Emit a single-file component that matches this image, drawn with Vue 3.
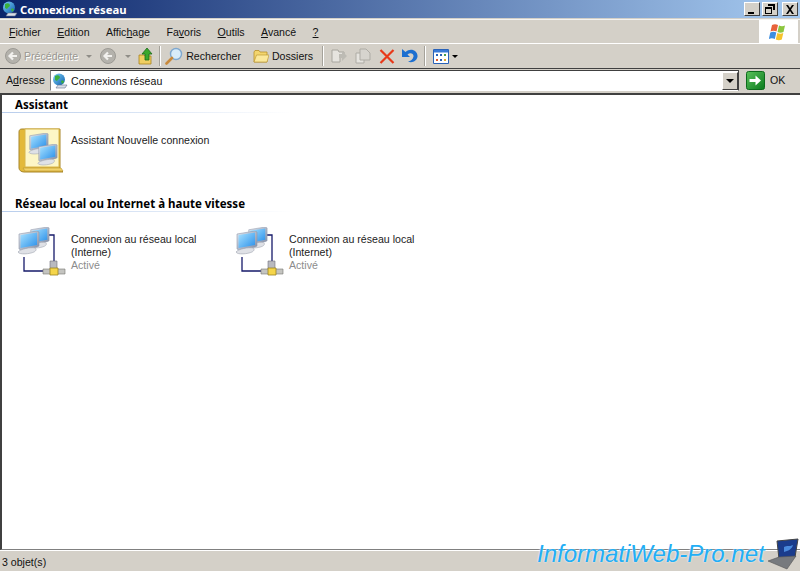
<script setup>
const menus = [
  { pre: '', key: 'F', post: 'ichier' },
  { pre: '', key: 'E', post: 'dition' },
  { pre: 'Affic', key: 'h', post: 'age' },
  { pre: 'Fa', key: 'v', post: 'oris' },
  { pre: '', key: 'O', post: 'utils' },
  { pre: '', key: 'A', post: 'vancé' },
  { pre: '', key: '?', post: '' }
]
const connections = [
  { name: 'Connexion au réseau local', sub: '(Interne)' },
  { name: 'Connexion au réseau local', sub: '(Internet)' }
]
</script>

<template>
  <div class="window">
    <svg width="0" height="0" class="defs">
      <defs>
        <linearGradient id="screen" x1="0" y1="0" x2="1" y2="1">
          <stop offset="0" stop-color="#a8e2ff" />
          <stop offset="1" stop-color="#2a90ea" />
        </linearGradient>
        <linearGradient id="case" x1="0" y1="0" x2="1" y2="1">
          <stop offset="0" stop-color="#e8eaf0" />
          <stop offset="1" stop-color="#7f8ba4" />
        </linearGradient>
        <linearGradient id="globe" x1="0" y1="0" x2="1" y2="1">
          <stop offset="0" stop-color="#7fd0f5" />
          <stop offset="1" stop-color="#0d5fb0" />
        </linearGradient>
        <linearGradient id="goBtn" x1="0" y1="0" x2="1" y2="1">
          <stop offset="0" stop-color="#5bc25b" />
          <stop offset="1" stop-color="#0a7a1e" />
        </linearGradient>
        <symbol id="pc" viewBox="0 0 24 24">
          <path d="M3 3 21 0 23 1 23 15 21 16 5 19 3 18Z" fill="url(#case)" stroke="#8d98ac" stroke-width=".6" />
          <path d="M4.500 4 21 1.500 21 14 4.500 17Z" fill="url(#screen)" />
          <path d="M2 21c2-3 13-5 17-4 2 1 1 3-1 4-4 2-15 3-16 0Z" fill="#dfe1e6" stroke="#9ea3ae" stroke-width=".6" />
        </symbol>
        <symbol id="globeNet" viewBox="0 0 16 16">
          <circle cx="7" cy="6.500" r="6" fill="url(#globe)" />
          <path d="M3 3c2-1 4-1 5 1 0 2-2 2-3 4L3 7ZM9 8c2-1 3 0 3 1l-2 2Z" fill="#3cae3c" />
          <path d="M6 12h9l-2 3H4Z" fill="#d9dee8" stroke="#66708a" stroke-width=".6" />
        </symbol>
        <symbol id="folder" viewBox="0 0 16 16">
          <path d="M1 4 2 2.500h4l1 1.500h7v10H1Z" fill="#f3d56e" stroke="#b7902a" stroke-width=".8" />
          <path d="M1 14 3.500 7H16l-2 7Z" fill="#fbe89b" stroke="#b7902a" stroke-width=".6" />
        </symbol>
        <symbol id="circleArrow" viewBox="0 0 16 16">
          <circle cx="8" cy="8" r="7.500" fill="#b4b2ac" stroke="#9c9a94" />
          <path d="M12 8H5M8 4.500 4.500 8 8 11.500" fill="none" stroke="#f2f1ee" stroke-width="2.200" />
        </symbol>
      </defs>
    </svg>

    <header class="titlebar">
      <svg class="title-icon" width="16" height="16"><use href="#globeNet" /></svg>
      <span class="title-text">Connexions réseau</span>
      <div class="caption-buttons">
        <button class="caption-btn">
          <svg width="10" height="9" viewBox="0 0 10 9"><path d="M1 7h6v2H1Z" /></svg>
        </button>
        <button class="caption-btn">
          <svg width="10" height="10" viewBox="0 0 10 10"><path d="M3 0h7v6H8V2H3ZM0 3h7v7H0Zm1 2v4h5V5Z" fill-rule="evenodd" /></svg>
        </button>
        <button class="caption-btn close">
          <svg width="10" height="9" viewBox="0 0 10 9"><path d="M1 0h2l2 3 2-3h2L6 4.500 9 9H7L5 6 3 9H1l3-4.500Z" /></svg>
        </button>
      </div>
    </header>

    <nav class="menubar">
      <span v-for="m in menus" :key="m.key" class="menu-item">{{ m.pre }}<u>{{ m.key }}</u>{{ m.post }}</span>
      <div class="flag-box">
        <svg width="20" height="18" viewBox="0 0 20 18">
          <path d="M3 2c2-1 4-1 6 0L7.500 8.500c-2-1-4-1-6 0Z" fill="#e8623a" />
          <path d="M10 2.500c2 1 4 1 6 0l-1.500 6.500c-2 1-4 1-6 0Z" fill="#8cc63f" />
          <path d="M1.300 9.500c2-1 4-1 6 0L5.800 16c-2-1-4-1-6 0Z" fill="#3d8ee0" />
          <path d="M8.300 10c2 1 4 1 6 0l-1.500 6.500c-2 1-4 1-6 0Z" fill="#f5c32c" />
        </svg>
      </div>
    </nav>

    <div class="toolbar">
      <svg class="ic back" width="16" height="16"><use href="#circleArrow" /></svg>
      <span class="tb-label disabled">Précédente</span>
      <span class="caret light drop-back"></span>
      <svg class="ic forward" width="16" height="16"><use href="#circleArrow" /></svg>
      <span class="caret light drop-fwd"></span>
      <svg class="ic up" width="16" height="18" viewBox="0 0 16 18">
        <path d="M1 8h5l1 1h6v8H1Z" fill="#f0cf62" stroke="#a98420" stroke-width=".8" />
        <path d="M9 1 14 7h-3v6H7V7H4Z" fill="#39a82e" stroke="#1c6a17" stroke-width=".8" />
      </svg>
      <span class="sep first-sep"></span>
      <svg class="ic search" width="18" height="18" viewBox="0 0 18 18">
        <circle cx="11" cy="7" r="5.500" fill="#d8ecfa" stroke="#7fa8cf" stroke-width="1.400" />
        <path d="M7 11 1.500 16.500" stroke="#c98a3c" stroke-width="2.600" stroke-linecap="round" />
      </svg>
      <span class="tb-label">Rechercher</span>
      <svg class="ic folders" width="16" height="16"><use href="#folder" /></svg>
      <span class="tb-label">Dossiers</span>
      <span class="sep second-sep"></span>
      <svg class="ic move" width="16" height="16" viewBox="0 0 16 16">
        <path d="M1 2h6l1 2h5v4H9v6H1Z" fill="#e6e4df" stroke="#a8a69f" />
        <path d="M8 6h3V3l5 5-5 5v-3H8Z" fill="#bdbbb4" />
      </svg>
      <svg class="ic copy" width="16" height="16" viewBox="0 0 16 16">
        <path d="M1 5h8v10H1Z" fill="#e6e4df" stroke="#aeaca5" />
        <path d="M5 1h6l4 4v7H5Z" fill="#d6d4ce" stroke="#aeaca5" />
      </svg>
      <svg class="ic del" width="16" height="15" viewBox="0 0 16 15">
        <path d="M1.500 1 14.500 14M14.500 1 1.500 14" stroke="#e8391a" stroke-width="2.200" />
      </svg>
      <svg class="ic undo" width="17" height="16" viewBox="0 0 17 16">
        <path d="M1 1v8h8L6.500 6.500c3-2.500 6.500-.5 6 2-.5 3-3 4.500-5.500 5 4.500 2 9-1 9.500-5C17 3 10 -1 4.500 4Z" fill="#1d6fd0" />
      </svg>
      <span class="sep third-sep"></span>
      <svg class="ic views" width="16" height="15" viewBox="0 0 16 15">
        <path d="M.500.500h15v14H.500Z" fill="#fff" stroke="#2a62b8" />
        <path d="M1 1h14v2.500H1Z" fill="#3a7ad6" />
        <path d="M3 5h2v2H3Z" fill="#2a62b8" /><path d="M7 5h2v2H7Z" fill="#2a62b8" /><path d="M11 5h2v2h-2Z" fill="#4aa04a" />
        <path d="M3 10h2v2H3Z" fill="#e05a2a" /><path d="M7 10h2v2H7Z" fill="#2a62b8" /><path d="M11 10h2v2h-2Z" fill="#e0a82a" />
      </svg>
      <span class="caret"></span>
    </div>

    <div class="addressbar">
      <span class="addr-label">A<u>d</u>resse</span>
      <div class="addr-box">
        <svg class="addr-icon" width="16" height="16"><use href="#globeNet" /></svg>
        <span class="addr-text">Connexions réseau</span>
        <span class="addr-drop"><span class="caret dark"></span></span>
      </div>
      <svg class="go-icon" width="19" height="19" viewBox="0 0 19 19">
        <rect x=".5" y=".5" width="18" height="18" rx="2" fill="url(#goBtn)" stroke="#0d6a1c" />
        <path d="M3.500 8h6V4.500l5.500 5-5.500 5V11h-6Z" fill="#fff" />
      </svg>
      <span class="go-text">OK</span>
    </div>

    <main class="content">
      <section class="group">
        <h2 class="group-title">Assistant</h2>
        <div class="items wizard-items">
          <div class="item">
            <svg class="item-icon" width="48" height="50" viewBox="0 3 48 50">
              <path d="M4 4h38v40l3 3H6c-3 0-5-2-5-4V7c0-2 1-3 3-3Z" fill="#e3b93a" stroke="#a8862a" />
              <path d="M7 4h34v38H7Z" fill="#fdf6c6" stroke="#d8b64a" />
              <path d="M5 43h38l2 3H7Z" fill="#f3d36a" stroke="#b8952f" stroke-width=".6" />
              <use href="#pc" x="9" y="8" width="22" height="22" />
              <use href="#pc" x="18" y="19" width="22" height="22" />
            </svg>
            <div class="item-text"><div>Assistant Nouvelle connexion</div></div>
          </div>
        </div>
      </section>
      <section class="group">
        <h2 class="group-title">Réseau local ou Internet à haute vitesse</h2>
        <div class="items">
          <div v-for="c in connections" :key="c.sub" class="item">
            <svg class="item-icon" width="48" height="50" viewBox="0 0 48 50">
              <path d="M27 8h9v26M6 30v14h19" fill="none" stroke="#161a6a" stroke-width="1.300" />
              <use href="#pc" x="10" y="0" width="22" height="22" />
              <use href="#pc" x="-2" y="4" width="24" height="24" />
              <path d="M25 42h22v5H25Z" fill="#c4c4c0" stroke="#77776f" stroke-width=".6" />
              <path d="M32 34h7v8h-7Z" fill="#b9bac0" stroke="#6f7078" stroke-width=".6" />
              <path d="M32 41h8v7h-8Z" fill="#f5d54a" stroke="#9a8322" stroke-width=".8" />
            </svg>
            <div class="item-text">
              <div>{{ c.name }}</div>
              <div>{{ c.sub }}</div>
              <div class="muted">Activé</div>
            </div>
          </div>
        </div>
      </section>
    </main>

    <footer class="statusbar">3 objet(s)</footer>

    <div class="watermark">
      <span class="wm-text">InformatiWeb-Pro.net</span>
      <svg class="wm-laptop" width="32" height="32" viewBox="0 0 32 32">
        <path d="M10 3 31 1 28 19 12 21Z" fill="#1a3c8c" stroke="#444" />
        <path d="M17 9c3-2 5 0 9-2-1 4-5 6-9 7Z" fill="#4a8adc" />
        <path d="M1 23 12 19 29 18 20 31Z" fill="#777a7e" stroke="#555" stroke-width=".6" />
      </svg>
    </div>
  </div>
</template>

<style scoped>
.window {
  position: relative;
  width: 800px;
  height: 571px;
  display: flex;
  flex-direction: column;
  overflow: hidden;
  background: #d4d0c8;
  font-family: "Liberation Sans", sans-serif;
  font-size: 10.6px;
  color: #111;
}
.defs { position: absolute; }
u { text-underline-offset: 1px; }

.titlebar {
  height: 18px;
  flex: none;
  display: flex;
  align-items: center;
  padding: 0 2px 0 2px;
  background: linear-gradient(90deg, #0a246a, #a6caf0);
  color: #fff;
  font-weight: 700;
}
.title-icon { margin-right: 2px; }
.title-text { font-family: "Noto Sans", sans-serif; font-size: 11.3px; }
.caption-buttons { margin-left: auto; display: flex; gap: 2px; }
.caption-btn {
  width: 16px;
  height: 14px;
  padding: 0;
  display: flex;
  align-items: center;
  justify-content: center;
  background: #d4d0c8;
  border: 1px solid;
  border-color: #fff #404040 #404040 #fff;
}
.caption-btn.close { margin-left: 2px; }

.menubar {
  height: 23px;
  flex: none;
  margin-top: 1px;
  display: flex;
  align-items: center;
  padding-left: 3px;
  border-top: 1px solid #f4f3f0;
  border-bottom: 1px solid #fff;
  box-sizing: content-box;
}
.menu-item { padding: 0 6px; margin-right: 4.400px; }
.flag-box {
  margin-left: auto;
  margin-right: 2px;
  width: 39px;
  height: 23px;
  background: #fff;
  display: flex;
  align-items: center;
  justify-content: center;
}

.toolbar {
  height: 24px;
  flex: none;
  display: flex;
  align-items: center;
  border-bottom: 1px solid #404040;
}
.ic { flex: none; }
.back { margin-left: 5px; }
.tb-label { margin-left: 3px; white-space: nowrap; }
.tb-label.disabled { color: #9a9892; text-shadow: 1px 1px 0 #fff; }
.caret {
  width: 0;
  height: 0;
  flex: none;
  border-left: 3px solid transparent;
  border-right: 3px solid transparent;
  border-top: 3px solid #000;
  margin-left: 3px;
}
.caret.light { border-top-color: #8f8d87; }
.drop-back { margin-left: 8px; }
.forward { margin-left: 8px; }
.drop-fwd { margin-left: 9px; }
.up { margin-left: 7px; }
.sep {
  width: 1px;
  height: 20px;
  flex: none;
  background: #a5a29a;
  box-shadow: 1px 0 0 #fff;
}
.first-sep { margin-left: 5px; }
.search { margin-left: 5px; }
.folders { margin-left: 12px; }
.second-sep { margin-left: 9px; }
.move { margin-left: 8px; }
.copy { margin-left: 8px; }
.del { margin-left: 8px; }
.undo { margin-left: 6px; }
.third-sep { margin-left: 6px; }
.views { margin-left: 8px; }

.addressbar {
  height: 24px;
  flex: none;
  display: flex;
  align-items: flex-start;
  padding-top: 1px;
  box-sizing: border-box;
}
.addr-label { margin-left: 6px; width: 39px; line-height: 20px; }
.addr-box {
  margin-left: 5px;
  width: 689px;
  height: 21px;
  box-sizing: border-box;
  display: flex;
  align-items: center;
  background: #fff;
  border: 1px solid;
  border-color: #404040 #404040 #fff #808080;
  padding-left: 1px;
}
.addr-text { margin-left: 3px; }
.addr-drop {
  margin-left: auto;
  width: 16px;
  height: 18px;
  display: flex;
  align-items: center;
  justify-content: center;
  background: #d4d0c8;
  border: 1px solid;
  border-color: #fff #404040 #404040 #fff;
  box-sizing: border-box;
}
.caret.dark { margin: 0; border-left-width: 4px; border-right-width: 4px; border-top-width: 4px; }
.go-icon { margin-left: 7px; margin-top: 1px; }
.go-text { margin-left: 5px; line-height: 20px; }

.content {
  flex: 1;
  min-height: 0;
  background: #fff;
  border-top: 2px solid #404040;
  border-left: 2px solid #404040;
  border-bottom: 1px solid #808080;
  box-sizing: border-box;
  padding-top: 2px;
}
.group-title {
  margin: 0;
  height: 16px;
  width: 290px;
  padding-left: 13px;
  box-sizing: border-box;
  font-family: "Noto Sans", sans-serif;
  font-size: 11.5px;
  line-height: 15px;
  font-weight: 700;
  color: #000;
  white-space: nowrap;
  position: relative;
}
.group-title::after {
  content: "";
  position: absolute;
  left: 0;
  right: 0;
  bottom: 0;
  height: 1px;
  background: linear-gradient(90deg, #b8cdec, #fff);
}
.items { display: flex; padding: 15px 0 0 16px; }
.wizard-items { height: 83px; box-sizing: border-box; }
.item { width: 218px; display: flex; align-items: flex-start; }
.item-icon { flex: none; }
.item-text {
  margin-left: 5px;
  padding-top: 6px;
  line-height: 13px;
  color: #222;
}
.muted { color: #8c8c8c; }

.statusbar {
  height: 21px;
  flex: none;
  display: flex;
  align-items: center;
  padding: 1px 0 0 2px;
  box-sizing: border-box;
  border-top: 1px solid #fff;
}

.watermark {
  position: absolute;
  left: 537px;
  top: 538px;
  display: flex;
  align-items: center;
}
.wm-text {
  font-family: "Liberation Sans", sans-serif;
  font-style: italic;
  font-size: 24px;
  line-height: 32px;
  color: #22aef5;
  white-space: nowrap;
  text-shadow: 0 0 2px #fff;
}
.wm-laptop { margin-left: 2px; }
</style>
